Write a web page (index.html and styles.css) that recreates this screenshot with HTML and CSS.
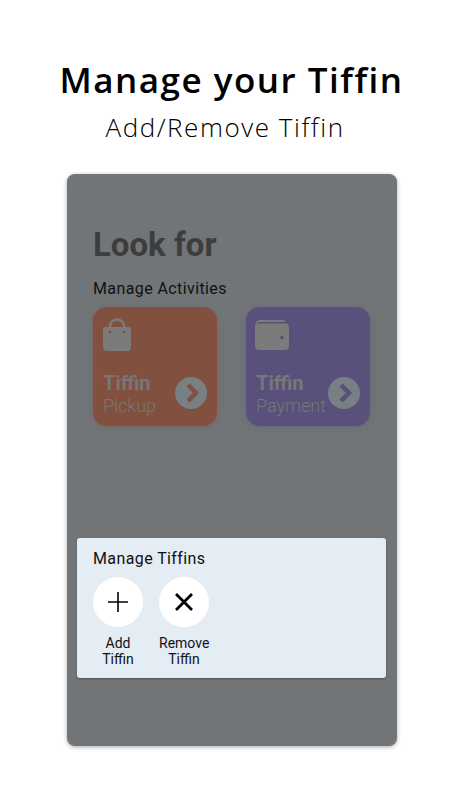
FILE: index.html
```html
<!DOCTYPE html>
<html lang="en">
<head>
    <meta charset="UTF-8">
    <meta name="viewport" content="width=device-width, initial-scale=1.0">
    <title>Manage your Tiffin</title>
    <link rel="stylesheet" href="styles.css">
</head>
<body>
    <h1 class="title">Manage your Tiffin</h1>
    <p class="subtitle">Add/Remove Tiffin</p>

    <div class="phone">
        <h2 class="look">Look for</h2>
        <p class="label">Manage Activities</p>
        <div class="tiles">
            <div class="tile orange">
                <div class="tile-icon">
                    <svg width="30" height="34" viewBox="0 0 30 34">
                        <path d="M3 9h24a2 2 0 0 1 2 2v18a4 4 0 0 1-4 4H5a4 4 0 0 1-4-4V11a2 2 0 0 1 2-2z" fill="#7b7b7b"/>
                        <path d="M8 13V8a7 6.500 0 0 1 14 0v5" fill="none" stroke="#7b7b7b" stroke-width="2.600"/>
                        <circle cx="8" cy="14" r="1.300" fill="#82503f"/>
                        <circle cx="22" cy="14" r="1.300" fill="#82503f"/>
                    </svg>
                </div>
                <div class="tile-name">Tiffin</div>
                <div class="tile-sub">Pickup</div>
                <svg class="go" width="32" height="32" viewBox="0 0 32 32">
                    <circle cx="16" cy="16" r="16" fill="#788084"/>
                    <path d="M13 8l8 8-8 8" fill="none" stroke="#82503f" stroke-width="4.500"/>
                </svg>
            </div>
            <div class="tile purple">
                <div class="tile-icon">
                    <svg width="34" height="30" viewBox="0 0 34 30">
                        <path d="M4 0h24a2.500 2.500 0 0 1 2.500 2H3.500L1 5a4 4 0 0 1 3-5z" fill="#7b7b7b"/>
                        <path d="M4 3.500h26a4 4 0 0 1 4 4V26a4 4 0 0 1-4 4H4a4 4 0 0 1-4-4V5z" fill="#7b7b7b"/>
                        <circle cx="27" cy="17.500" r="1.800" fill="#59507c"/>
                    </svg>
                </div>
                <div class="tile-name">Tiffin</div>
                <div class="tile-sub">Payment</div>
                <svg class="go" width="32" height="32" viewBox="0 0 32 32">
                    <circle cx="16" cy="16" r="16" fill="#788084"/>
                    <path d="M13 8l8 8-8 8" fill="none" stroke="#59507c" stroke-width="4.500"/>
                </svg>
            </div>
        </div>

        <div class="sheet">
            <p class="sheet-title">Manage Tiffins</p>
            <div class="actions">
                <div class="action">
                    <div class="circle">
                        <svg width="20" height="20" viewBox="0 0 20 20">
                            <path d="M10 0v20M0 10h20" fill="none" stroke="#000" stroke-width="1.600"/>
                        </svg>
                    </div>
                    <span>Add<br>Tiffin</span>
                </div>
                <div class="action">
                    <div class="circle">
                        <svg width="20" height="20" viewBox="0 0 20 20">
                            <path d="M2 2l16 16M18 2 2 18" fill="none" stroke="#000" stroke-width="2.800"/>
                        </svg>
                    </div>
                    <span>Remove<br>Tiffin</span>
                </div>
            </div>
        </div>
    </div>
</body>
</html>
```

FILE: styles.css
```css
body {
    margin: 0;
    height: 800px;
    background: #fff;
    color: #000;
    font-family: Roboto, sans-serif;
    overflow: hidden;
}
.title {
    margin: 0;
    padding: 58px 0 0 13px;
    font-family: "Open Sans", sans-serif;
    font-size: 35px;
    line-height: 44px;
    font-weight: 600;
    letter-spacing: 1.500px;
    text-align: center;
}
.subtitle {
    margin: 9px 0 0;
    font-family: "Open Sans", sans-serif;
    font-size: 26px;
    line-height: 32px;
    font-weight: 300;
    letter-spacing: 1.550px;
    text-align: center;
}
.phone {
    display: flex;
    flex-direction: column;
    box-sizing: border-box;
    width: 330px;
    height: 572px;
    margin: 31px 0 0 67px;
    padding: 52px 11px 0 10px;
    background: #717578;
    border-radius: 8px;
    box-shadow: 0 1px 4px rgba(0,0,0,0.35);
}
.look {
    margin: 0 0 0 16px;
    font-size: 33px;
    line-height: 38px;
    font-weight: 700;
    color: #3d3d3d;
}
.label {
    margin: 15px 0 0 16px;
    font-size: 16px;
    line-height: 20px;
    letter-spacing: 0.400px;
    color: #111;
}
.tiles {
    display: flex;
    gap: 29px;
    margin: 8px 0 0 16px;
}
.tile {
    position: relative;
    box-sizing: border-box;
    width: 124px;
    height: 119px;
    padding: 11px 10px 0;
    border-radius: 14px;
    color: #777;
}
.orange {
    background: #82503f;
    box-shadow: 0 1px 6px rgba(130,80,63,0.4);
}
.purple {
    background: #59507c;
    box-shadow: 0 1px 6px rgba(89,80,124,0.4);
}
.tile-icon {
    display: flex;
    align-items: center;
    height: 34px;
    margin-left: -1px;
}
.tile-name {
    margin-top: 19px;
    font-size: 20px;
    line-height: 24px;
    font-weight: 700;
}
.tile-sub {
    font-size: 18px;
    line-height: 21px;
    font-weight: 300;
}
.go {
    position: absolute;
    right: 10px;
    bottom: 17px;
}
.sheet {
    margin-top: auto;
    margin-bottom: 68px;
    box-sizing: border-box;
    height: 140px;
    padding: 11px 16px 0;
    background: #e4ecf4;
    border-radius: 3px;
    box-shadow: 0 1px 2px rgba(0,0,0,0.3);
}
.sheet-title {
    margin: 0;
    font-size: 16px;
    line-height: 20px;
    letter-spacing: 0.400px;
    color: #111;
}
.actions {
    display: flex;
    gap: 16px;
    margin-top: 8px;
}
.action {
    width: 50px;
    font-size: 14px;
    line-height: 16px;
    text-align: center;
    color: #111;
}
.circle {
    display: flex;
    align-items: center;
    justify-content: center;
    width: 50px;
    height: 50px;
    margin-bottom: 8px;
    background: #fff;
    border-radius: 50%;
}
.action span {
    display: block;
    white-space: nowrap;
}
```
